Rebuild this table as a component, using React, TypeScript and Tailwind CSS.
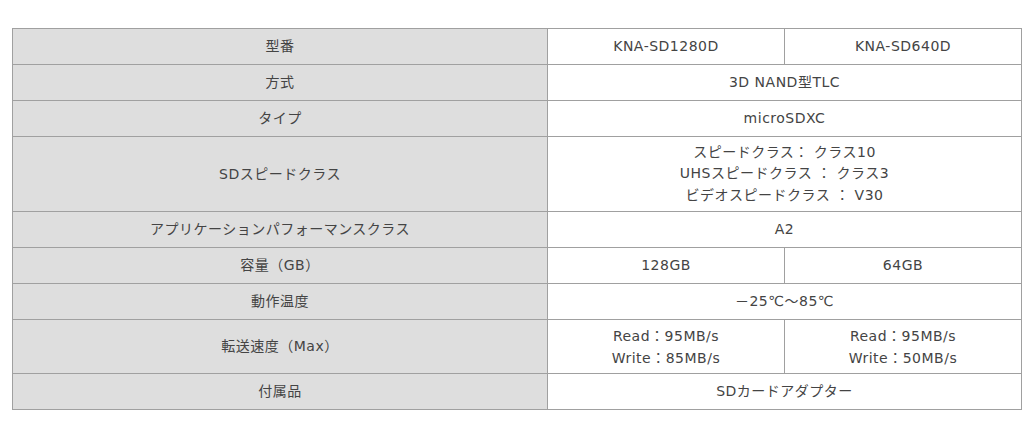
const font = "font-['DejaVu_Sans','Noto_Sans_CJK_JP',sans-serif]";

const cell = "border border-[#a0a0a0] text-center align-middle";
const label = `${cell} bg-[#dedede]`;

export default function App() {
  return (
    <div className={`min-h-[428px] w-[1034px] bg-white pt-[28px] pl-[12px] ${font} text-[14px] tracking-[0.5px] text-[#444]`}>
      <table className="w-[1009px] table-fixed border-collapse">
        <colgroup>
          <col className="w-[535px]" />
          <col className="w-[237px]" />
          <col className="w-[237px]" />
        </colgroup>
        <tbody>
          <tr className="h-[36px]">
            <td className={label}>型番</td>
            <td className={cell}>KNA-SD1280D</td>
            <td className={cell}>KNA-SD640D</td>
          </tr>
          <tr className="h-[36px]">
            <td className={label}>方式</td>
            <td className={cell} colSpan={2}>3D NAND型TLC</td>
          </tr>
          <tr className="h-[36px]">
            <td className={label}>タイプ</td>
            <td className={cell} colSpan={2}>microSDXC</td>
          </tr>
          <tr className="h-[75px]">
            <td className={label}>SDスピードクラス</td>
            <td className={`${cell} leading-[21.5px]`} colSpan={2}>
              <div>スピードクラス： クラス10</div>
              <div>UHSスピードクラス ： クラス3</div>
              <div>ビデオスピードクラス ： V30</div>
            </td>
          </tr>
          <tr className="h-[36px]">
            <td className={label}>アプリケーションパフォーマンスクラス</td>
            <td className={cell} colSpan={2}>A2</td>
          </tr>
          <tr className="h-[36px]">
            <td className={label}>容量（GB）</td>
            <td className={cell}>128GB</td>
            <td className={cell}>64GB</td>
          </tr>
          <tr className="h-[36px]">
            <td className={label}>動作温度</td>
            <td className={cell} colSpan={2}>－25℃～85℃</td>
          </tr>
          <tr className="h-[54px]">
            <td className={label}>転送速度（Max）</td>
            <td className={`${cell} leading-[22px]`}>
              <div>Read：95MB/s</div>
              <div>Write：85MB/s</div>
            </td>
            <td className={`${cell} leading-[22px]`}>
              <div>Read：95MB/s</div>
              <div>Write：50MB/s</div>
            </td>
          </tr>
          <tr className="h-[36px]">
            <td className={label}>付属品</td>
            <td className={cell} colSpan={2}>SDカードアダプター</td>
          </tr>
        </tbody>
      </table>
    </div>
  );
}
